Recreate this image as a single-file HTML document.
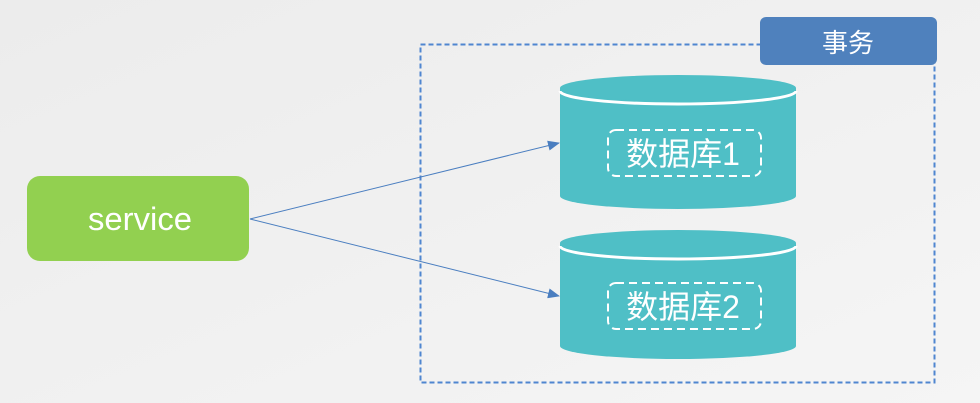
<!DOCTYPE html>
<html><head><meta charset="utf-8"><style>
html,body{margin:0;padding:0;width:980px;height:403px;overflow:hidden;background:#f1f1f1}
</style></head><body>
<svg width="980" height="403" viewBox="0 0 980 403" xmlns="http://www.w3.org/2000/svg" font-family="'Liberation Sans','Noto Sans CJK SC',sans-serif">
<defs>
<linearGradient id="bg" x1="0" y1="0" x2="1" y2="1"><stop offset="0" stop-color="#ececec"/><stop offset="1" stop-color="#f5f5f5"/></linearGradient>
<marker id="ar" markerWidth="12" markerHeight="10" refX="11" refY="5" orient="auto" markerUnits="userSpaceOnUse"><path d="M0,0 L12,5 L0,10 Z" fill="#4a7ec0"/></marker>
</defs>
<rect width="980" height="403" fill="url(#bg)"/>
<rect x="420.5" y="44.5" width="514" height="338" fill="none" stroke="#4f86d0" stroke-width="2" stroke-dasharray="5,3"/>
<rect x="760" y="17" width="177" height="48" rx="6" fill="#4f81bd"/>
<text x="848" y="52" font-size="26" fill="#fff" text-anchor="middle">事务</text>
<rect x="27" y="176" width="222" height="85" rx="13" fill="#92d050"/>
<text x="140" y="230" font-size="32" fill="#fff" text-anchor="middle" textLength="104" lengthAdjust="spacingAndGlyphs">service</text>
<line x1="250" y1="219" x2="559" y2="143" stroke="#4a7ec0" stroke-width="1" marker-end="url(#ar)"/>
<line x1="250" y1="219" x2="559" y2="296" stroke="#4a7ec0" stroke-width="1" marker-end="url(#ar)"/>
<g>
<path d="M560,88 L560,196 A118,13 0 0 0 796,196 L796,88 Z" fill="#4fbfc6"/>
<path d="M560,91 A118,13 0 0 0 796,91" fill="none" stroke="#fff" stroke-width="3"/>
<ellipse cx="678" cy="88" rx="118" ry="13" fill="#4fbfc6"/>
<rect x="608" y="130" width="153" height="46" rx="8" fill="none" stroke="#fff" stroke-width="2" stroke-dasharray="8,5"/>
<text x="683" y="165" font-size="32" fill="#fff" text-anchor="middle">数据库1</text>
</g>
<g>
<path d="M560,243 L560,346 A118,13 0 0 0 796,346 L796,243 Z" fill="#4fbfc6"/>
<path d="M560,246 A118,13 0 0 0 796,246" fill="none" stroke="#fff" stroke-width="3"/>
<ellipse cx="678" cy="243" rx="118" ry="13" fill="#4fbfc6"/>
<rect x="608" y="283" width="153" height="46" rx="8" fill="none" stroke="#fff" stroke-width="2" stroke-dasharray="8,5"/>
<text x="683" y="318" font-size="32" fill="#fff" text-anchor="middle">数据库2</text>
</g>
</svg>
</body></html>
